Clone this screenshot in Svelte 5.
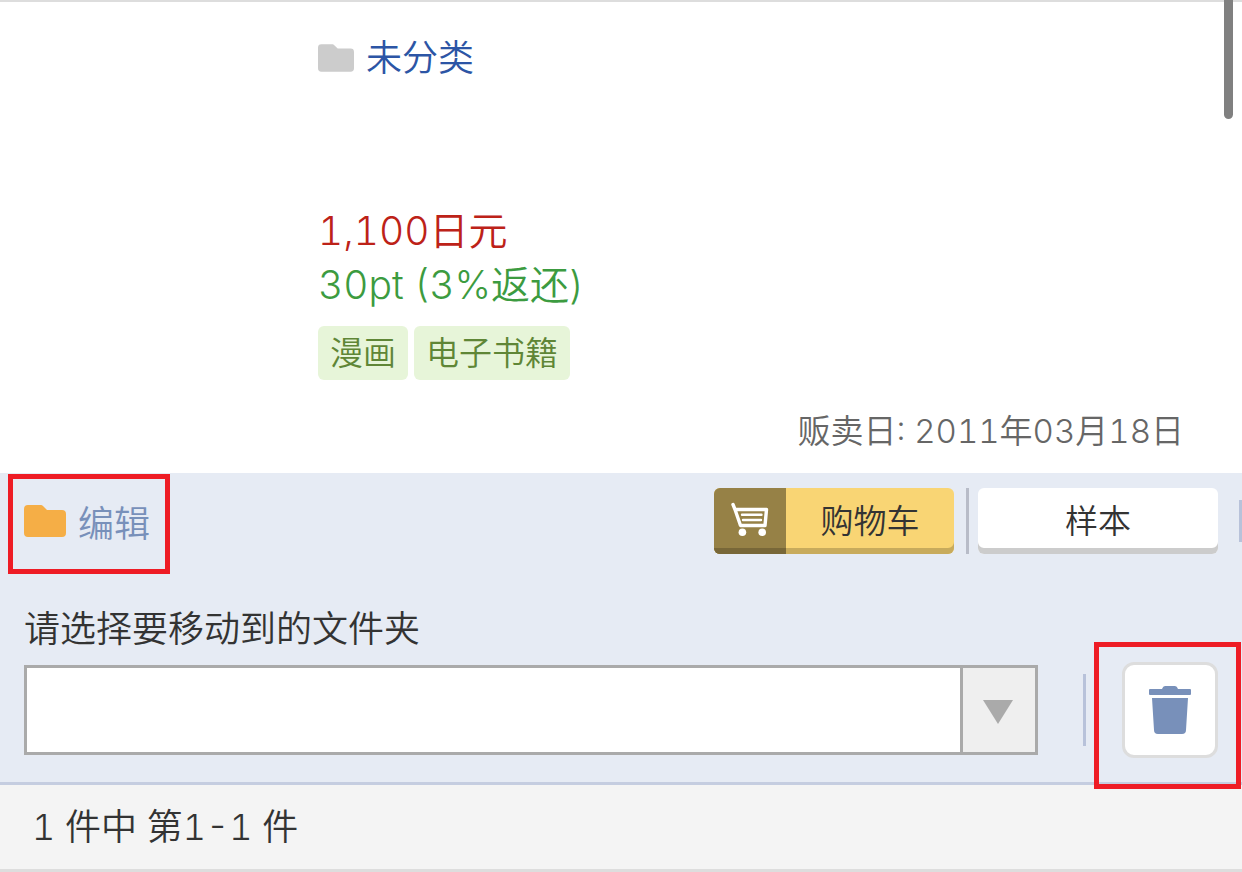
<script>
  let folder = ''
  const folders = ['']
  const tags = ['漫画', '电子书籍']
</script>

<main>
  <section class="info">
    <a class="category" href="#uncategorized">
      <svg width="36" height="28" viewBox="0 0 42 32" aria-hidden="true">
        <path fill="#ccc" d="M4 0h13q1 0 2 1l4 4h15q4 0 4 4v19q0 4-4 4H4q-4 0-4-4V4q0-4 4-4z" />
      </svg>
      未分类
    </a>
    <p class="price">1,100日元</p>
    <p class="point">30pt (3%返还)</p>
    <ul class="tags">
      {#each tags as tag}
        <li>{tag}</li>
      {/each}
    </ul>
    <p class="date">贩卖日: 2011年03月18日</p>
  </section>

  <section class="tools">
    <div class="row">
      <button class="edit marked">
        <svg width="42" height="32" viewBox="0 0 42 32" aria-hidden="true">
          <path fill="#f5ae46" d="M4 0h13q1 0 2 1l4 4h15q4 0 4 4v19q0 4-4 4H4q-4 0-4-4V4q0-4 4-4z" />
        </svg>
        <span>编辑</span>
      </button>
      <div class="buy">
        <button class="cart">
          <span class="cart-icon">
            <svg width="40" height="36" viewBox="0 0 40 36" fill="none" stroke="#fff" aria-hidden="true">
              <path stroke-width="3.4" stroke-linecap="round" stroke-linejoin="round" d="M3 4.5l2 5 5.5 16h24.5l1.5-16H5" />
              <path stroke-width="2.4" stroke-linecap="round" d="M12 14.8h19.5M13 20h18" />
              <circle cx="12.4" cy="32.2" r="3.8" fill="#fff" stroke="none" />
              <circle cx="32.2" cy="32.2" r="3.8" fill="#fff" stroke="none" />
            </svg>
          </span>
          <span class="cart-text">购物车</span>
        </button>
        <i class="bar"></i>
        <button class="sample">样本</button>
        <i class="edge"></i>
      </div>
    </div>

    <label for="folder">请选择要移动到的文件夹</label>
    <div class="move">
      <div class="select">
        <select id="folder" bind:value={folder}>
          {#each folders as f}
            <option value={f}>{f}</option>
          {/each}
        </select>
        <span class="arrow">
          <svg width="30" height="24" viewBox="0 0 30 24" aria-hidden="true">
            <path fill="#aaa" d="M0 0h30L15 24z" />
          </svg>
        </span>
      </div>
      <i class="split"></i>
      <button class="delete marked" aria-label="删除">
        <svg width="42" height="48" viewBox="0 0 42 48" fill="#7890ba" aria-hidden="true">
          <path d="M1 3h12q1-3 3-3h10q2 0 3 3h12q1 0 1 1v4q0 1-1 1H1q-1 0-1-1V4q0-1 1-1z" />
          <path d="M3 12h36l-2 32q0 4-4 4H9q-4 0-4-4z" />
        </svg>
      </button>
    </div>
  </section>

  <footer>1 件中 第1-1 件</footer>
  <i class="scroll"></i>
</main>

<style>
  :global(body) { background: #fff; }
  main { position: relative; border-top: 2px solid #ddd; font-family: Inter, "Noto Sans CJK SC", sans-serif; font-weight: 350; font-variant-numeric: tabular-nums; color: #333; }
  p, ul { margin: 0; padding: 0; }
  svg { display: block; flex: none; }
  button { padding: 0; border: none; font: inherit; color: inherit; cursor: pointer; }

  .info { display: flex; flex-direction: column; align-items: flex-start; padding: 29px 58px 18px 318px; }
  .category { display: flex; align-items: center; gap: 12px; margin-bottom: 119px; font-size: 36px; line-height: 54px; color: #2c55a5; text-decoration: none; }
  .price, .point { font-size: 39px; line-height: 54px; }
  .price { color: #bd2218; }
  .point { color: #3c9b40; }
  .tags { display: flex; gap: 6px; margin-top: 14px; list-style: none; }
  .tags li { padding: 0 12px; border-radius: 6px; background: #e7f5d9; color: #5f8636; font-size: 33px; line-height: 54px; }
  .date { align-self: flex-end; margin-top: 27px; font-size: 33px; line-height: 48px; color: #666; }

  .tools { padding: 15px 24px 24px; background: #e6ebf4; border-bottom: 3px solid #c5cde0; }
  .row { display: flex; justify-content: space-between; align-items: center; margin-right: -24px; }
  .edit { display: flex; align-items: center; gap: 12px; background: none; font-size: 36px; line-height: 54px; color: #7890ba; }
  .edit span { padding-top: 6px; }
  .edit svg { margin-bottom: 1px; }
  .buy { display: flex; align-items: center; }
  .cart, .sample { width: 240px; height: 66px; border-radius: 6px; font-size: 33px; line-height: 60px; }
  .cart { display: flex; overflow: hidden; background: #f9d574; box-shadow: inset 0 -6px #c8ab5c; }
  .cart-icon { display: grid; place-items: center; width: 72px; height: 66px; box-sizing: border-box; background: #968146; border-bottom: 6px solid #786738; }
  .cart-text { flex: 1; padding-top: 3px; }
  .bar { width: 3px; height: 66px; margin: 0 9px 0 12px; background: #b8bcc8; }
  .sample { background: #fff; box-shadow: inset 0 -6px #ccc; }
  .edge { width: 3px; height: 42px; margin-left: 21px; background: #b8c2da; }

  label { display: block; margin: 50px 0 7px; font-size: 36px; line-height: 51px; }
  .move { display: flex; align-items: center; }
  .select { flex: 1; display: flex; height: 84px; border: 3px solid #aaa; background: #fff; }
  select { flex: 1; min-width: 0; padding: 0 12px; border: none; background: #fff; appearance: none; font: inherit; font-size: 36px; color: inherit; }
  .arrow { display: grid; place-items: center; width: 72px; border-left: 3px solid #aaa; background: #efefef; }
  .arrow svg { margin: 4px 3px 0 0; }
  .split { width: 3px; height: 72px; margin: 0 36px 0 45px; background: #b8c2da; }
  .delete { display: grid; place-items: center; width: 96px; height: 96px; background: #fff; border: 3px solid #ddd; border-radius: 12px; }

  /* red callout frames */
  .marked { position: relative; }
  .marked::after { content: ''; position: absolute; border: 5px solid #ee1c25; pointer-events: none; }
  .edit::after { inset: -17px -20px -23px -16px; }
  .delete::after { inset: -23px -26px -34px -31px; }

  footer { padding: 15px 32px; background: #f4f4f4; border-bottom: 3px solid #ddd; font-size: 36px; line-height: 54px; }
  .scroll { position: absolute; top: -2px; right: 9px; width: 9px; height: 119px; border-radius: 0 0 5px 5px; background: #808080; }
</style>
